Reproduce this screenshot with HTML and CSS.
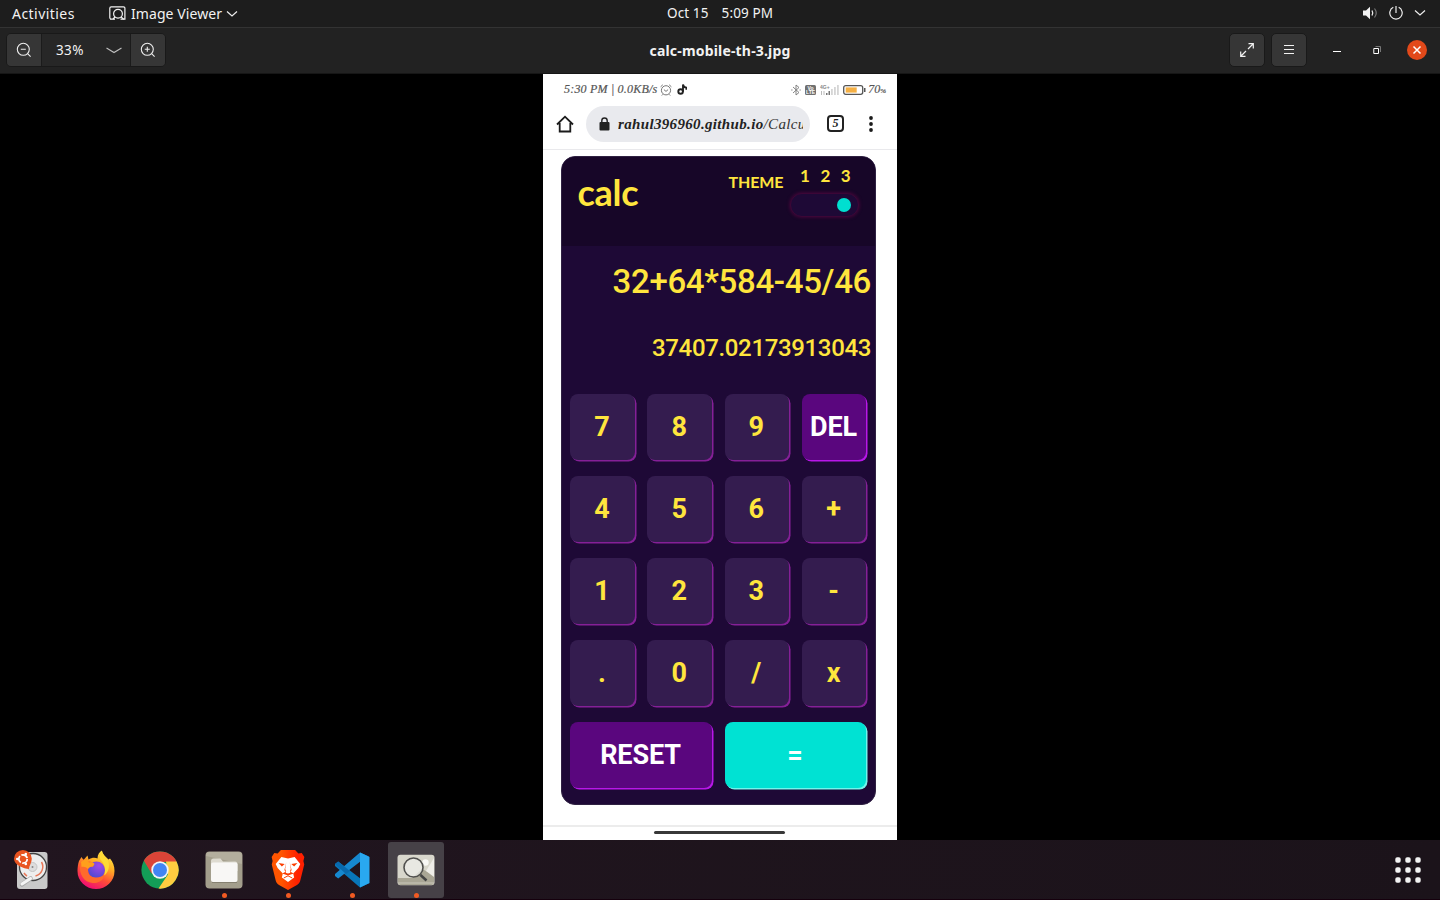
FILE: index.html
```
<!DOCTYPE html>
<html lang="en">
<head>
<meta charset="utf-8">
<title>calc-mobile-th-3.jpg</title>
<link rel="stylesheet" href="styles.css">
</head>
<body>
<div class="desktop">
  <header class="topbar">
    <div class="topbar-left">
      <span class="activities">Activities</span>
      <svg class="app-icon" width="17" height="15" viewBox="0 0 17 15" fill="none" stroke="#f2f2f2" stroke-width="1.2"><path d="M4 13H2.200a1.400 1.400 0 0 1-1.400-1.400V2.200A1.400 1.400 0 0 1 2.200.8h12.300a1.400 1.400 0 0 1 1.400 1.400v11M1 13.200h5M11.500 13.200h5"/><circle cx="9" cy="7.800" r="4.400"/><path d="M12.200 11l2.600 2.400M4 13l2-2"/></svg>
      <span class="app-name">Image Viewer</span>
      <svg width="12" height="8" viewBox="0 0 12 8" fill="none" stroke="#eee" stroke-width="1.200"><path d="M1 1.500l5 4.500 5-4.500"/></svg>
    </div>
    <div class="clock"><span>Oct 15</span><span>5:09 PM</span></div>
    <div class="topbar-right">
      <svg width="16" height="14" viewBox="0 0 16 14" fill="none"><path d="M1 4.500h3L8 .8v12.400L4 9.500H1z" fill="#f2f2f2"/><path d="M10 4.500q1.500 2.500 0 5" stroke="#eee" stroke-width="1.300"/><path d="M12.500 2.500q3.500 4.500 0 9" stroke="#777" stroke-width="1.200"/></svg>
      <svg width="14" height="14" viewBox="0 0 14 14" fill="none" stroke="#eee" stroke-width="1.200"><path d="M7 0v7M4.300 1.300a6.200 6.200 0 1 0 5.400 0"/></svg>
      <svg width="12" height="8" viewBox="0 0 12 8" fill="none" stroke="#eee" stroke-width="1.200"><path d="M1 1.500l5 4.500 5-4.500"/></svg>
    </div>
  </header>

  <div class="titlebar">
    <div class="zoom-group">
      <button class="tool"><svg width="16" height="16" viewBox="0 0 16 16" fill="none" stroke="#eee" stroke-width="1.100"><circle cx="7.300" cy="7.300" r="6"/><path d="M4.800 7.300h5M11.600 11.600l3 3"/></svg></button>
      <div class="zoom-value"><span>33%</span><svg width="16" height="7" viewBox="0 0 16 7" fill="none" stroke="#bbb" stroke-width="1.200"><path d="M.5 1l7.500 4.500L15.500 1"/></svg></div>
      <button class="tool"><svg width="16" height="16" viewBox="0 0 16 16" fill="none" stroke="#eee" stroke-width="1.100"><circle cx="7.300" cy="7.300" r="6"/><path d="M4.800 7.300h5M7.300 4.800v5M11.600 11.600l3 3"/></svg></button>
    </div>
    <div class="file-title">calc-mobile-th-3.jpg</div>
    <div class="window-tools">
      <button class="tool boxed"><svg width="14" height="14" viewBox="0 0 14 14" fill="none" stroke="#f2f2f2" stroke-width="1.200"><path d="M8 6l5-5M8.500.7h4.800v4.800M6 8l-5 5M.7 8.500v4.800h4.800"/></svg></button>
      <button class="tool boxed"><svg width="10" height="10" viewBox="0 0 10 10" stroke="#f2f2f2"><path d="M0 .5h10M0 4.500h10M0 8.500h10"/></svg></button>
      <svg class="minimize" width="8" height="2" viewBox="0 0 8 2"><path fill="#fff" d="M0 0h8v1H0z"/></svg>
      <svg class="restore" width="9" height="9" viewBox="0 0 9 9" fill="none"><path d="M2.500 .5h5V6" stroke="#777"/><path d="M.8 2.500h4.700v5H.8z" stroke="#fff"/></svg>
      <svg class="close" width="20" height="20" viewBox="0 0 20 20"><circle cx="10" cy="10" r="10" fill="#e2491a"/><path d="M6.500 6.500l7 7M13.500 6.500l-7 7" stroke="#fff" stroke-width="1.500"/></svg>
    </div>
  </div>

  <main class="viewer">
    <div class="phone">
      <div class="status">
        <span class="status-text">5:30 PM | 0.0KB/s</span>
        <svg class="alarm" width="12" height="12" viewBox="0 0 12 12" fill="none" stroke="#666" stroke-width=".9"><circle cx="6" cy="6.300" r="4.600"/><path d="M3.900 5.600L6 7.400l2.100-1.800M.6 2.800L2.800.8M11.400 2.800L9.200.8M2.700 10.400l-.9 1.100M9.300 10.400l.9 1.100"/></svg>
        <svg class="note" width="10" height="11" viewBox="0 0 10 11" fill="none" stroke="#222" stroke-width="1.900"><circle cx="3.600" cy="7.500" r="2.300"/><path d="M6 7.800V.5c.3 1.900 1.300 3 3.400 3.100v2.200"/></svg>
        <div class="status-icons">
          <svg width="10" height="12" viewBox="0 0 10 12" fill="none" stroke="#777" stroke-width=".9"><path d="M2 3l6 5.500-3 2.500V1l3 2.500L2 9M.2 6h1.300M8.500 6h1.300"/></svg>
          <svg width="11" height="10" viewBox="0 0 11 10"><rect width="11" height="10" rx="1.500" fill="#707070"/><text x="5.500" y="4.800" class="tiny white" text-anchor="middle">Vo</text><text x="5.500" y="9" class="tiny white" text-anchor="middle">LTE</text></svg>
          <svg width="19" height="11" viewBox="0 0 19 11"><text x="0" y="4.500" class="tiny gray">4G+</text><path d="M1.500 7v4M4 7v4" stroke="#aaa" stroke-width=".8"/><path d="M6 9h1.500v2H6zM8.500 7H10v4H8.500z" fill="#777"/><path d="M11 5h1.800v6H11zM14 3h1.800v8H14zM17 1h1.800v10H17z" fill="#d5d5d5"/></svg>
          <svg width="23" height="10" viewBox="0 0 23 10"><rect x=".7" y=".7" width="19" height="8.600" rx="2" fill="#fff" stroke="#555" stroke-width="1.300"/><rect x="2.700" y="2.400" width="11" height="5.200" fill="#f5b044"/><path d="M21 3h1.500v4H21z" fill="#555"/></svg>
          <span class="battery-text">70<small>%</small></span>
        </div>
      </div>

      <div class="browser">
        <svg class="home" width="18" height="18" viewBox="0 0 18 18" fill="none" stroke="#1b1b1b" stroke-width="1.800"><path d="M1 9.500L9 1.700l8 7.800M3.700 8v8.500h10.600V8"/></svg>
        <div class="url">
          <svg width="11" height="14" viewBox="0 0 11 14"><rect x=".5" y="5" width="10" height="8.500" rx="1" fill="#222"/><path d="M2.800 5.500V3.700a2.700 2.700 0 0 1 5.400 0v1.800" fill="none" stroke="#222" stroke-width="1.400"/></svg>
          <span class="url-text">rahul396960.github.io<span class="path">/Calcu</span></span>
        </div>
        <div class="tabs">5</div>
        <svg class="more" width="4" height="16" viewBox="0 0 4 16" fill="#1b1b1b"><circle cx="2" cy="2" r="1.900"/><circle cx="2" cy="8" r="1.900"/><circle cx="2" cy="14" r="1.900"/></svg>
      </div>

      <div class="page">
        <section class="calculator">
          <div class="calc-head">
            <h1 class="brand">calc</h1>
            <div class="theme-label">THEME</div>
            <div class="switcher">
              <div class="numbers"><span>1</span><span>2</span><span>3</span></div>
              <div class="toggle"><i class="knob"></i></div>
            </div>
          </div>
          <div class="display">
            <div class="expression">32+64*584-45/46</div>
            <div class="result">37407.02173913043</div>
          </div>
          <div class="keys">
            <button class="key">7</button><button class="key">8</button><button class="key">9</button><button class="key purple">DEL</button>
            <button class="key">4</button><button class="key">5</button><button class="key">6</button><button class="key">+</button>
            <button class="key">1</button><button class="key">2</button><button class="key">3</button><button class="key">-</button>
            <button class="key">.</button><button class="key">0</button><button class="key">/</button><button class="key">x</button>
            <button class="key purple wide">RESET</button><button class="key cyan wide">=</button>
          </div>
        </section>
      </div>
      <div class="nav"><i class="home-bar"></i></div>
    </div>
  </main>

  <footer class="dock">
    <div class="dock-item">
      <svg width="40" height="42" viewBox="0 0 40 42"><rect x="5" y="3" width="30.500" height="37" rx="3" fill="#c9c9c9"/><circle cx="21" cy="18" r="13.500" fill="#eee" stroke="#444" stroke-width="1.300"/><circle cx="20.500" cy="18" r="4.500" fill="#ddd" stroke="#c5c5c5"/><circle cx="20.500" cy="18" r="1" fill="#888"/><path d="M29.500 13a9.500 9.500 0 0 1-6 14M12 24a9 9 0 0 0 3 3" fill="none" stroke="#e87858" stroke-width="1.500"/><path d="M10 35.500l8.500-6" stroke="#aaa" stroke-width="4.500" stroke-linecap="round"/><path d="M10 35l8.500-5.500" stroke="#f4f4f4" stroke-width="3.200" stroke-linecap="round"/><path d="M17 20C12 20 2 16 2 9.800a8.900 8.900 0 0 1 17.800 0c0 4-2.800 7-2.800 10.200z" fill="#e95420"/><circle cx="11" cy="10" r="4.200" fill="none" stroke="#fff" stroke-width="1.800" stroke-dasharray="7.200 1.600"/><g fill="#fff"><circle cx="5.300" cy="10" r="1.300"/><circle cx="13.800" cy="5" r="1.300"/><circle cx="13.800" cy="15" r="1.300"/></g></svg>
    </div>
    <div class="dock-item">
      <svg width="40" height="40" viewBox="0 0 40 40"><defs><linearGradient id="fox" x1=".8" y1="0" x2=".3" y2="1"><stop offset="0" stop-color="#fff04a"/><stop offset=".35" stop-color="#ffb024"/><stop offset=".65" stop-color="#ff4f36"/><stop offset="1" stop-color="#ef0878"/></linearGradient><radialGradient id="globe" cx=".65" cy=".25" r=".8"><stop offset="0" stop-color="#a348e8"/><stop offset="1" stop-color="#4a4ad0"/></radialGradient></defs><path d="M3 11l2.500-4 2 3 4-4.500 1 4c3-2 7-2 9-1 0-4 2-6.500 4.500-8 .5 4 4 6 6.500 9l1.500-1C37 12 38.500 16 38.500 21A18.500 18 0 0 1 1.500 21C1.500 17 2 14 3 11z" fill="url(#fox)"/><circle cx="20.500" cy="20" r="8.500" fill="url(#globe)"/><path d="M4 14l4-5 4 3c2-1 4 0 6 2l-1 2.500c-3 0-5 1-5 4 0 4 3 7 8 7 4 0 7-1.500 9-4-1 7-7 10-12.500 9.500C8 32 3 25 4 14z" fill="#ff6a2c"/><path d="M5 12l5-3.500 3 4c3-.5 5 0 5.500 1.500l-1.500 2.500c-3 0-4.500 1-5 2.500-2-2-4-2.500-6.500-2z" fill="#ff9f1c"/><path d="M26 1.500c-3 4-3 7 0 10 3 4 4 9 2 14 5-3 6-10 4-15-2-3-5-5-6-9z" fill="#ffdb36"/></svg>
    </div>
    <div class="dock-item">
      <svg width="38" height="38" viewBox="0 0 38 38"><circle cx="19" cy="19" r="18.600" fill="#139e57"/><path d="M2.900 9.700A18.600 18.600 0 0 1 35.100 9.700L35.500 11H19l-8.500 11.500z" fill="#db4437"/><path d="M35.500 10.500A18.600 18.600 0 0 1 17.500 37.600L27 23.500 25 10.500z" fill="#ffcd40"/><circle cx="19" cy="19" r="8.700" fill="#f4f4f4"/><circle cx="19" cy="19" r="7" fill="#4285f4"/></svg>
    </div>
    <div class="dock-item running">
      <svg width="38" height="38" viewBox="0 0 38 38"><rect x=".5" y=".5" width="37" height="37" rx="4" fill="#a39e8c"/><path d="M1 5q0-4 4-4h28q4 0 4 4v8z" fill="#b3ae9d"/><path d="M6 10q0-2.500 2.500-2.500h7l2.500 3H30q2.500 0 2.500 2.500v7H6z" fill="#dedbd0"/><rect x="6" y="11.500" width="26.500" height="19.500" rx="2" fill="#f8f7f5"/><path d="M7 31.500h25" stroke="#858070"/></svg>
    </div>
    <div class="dock-item running">
      <svg width="34" height="40" viewBox="0 0 36 40" preserveAspectRatio="none"><defs><linearGradient id="lion"><stop offset=".3" stop-color="#ff5500"/><stop offset=".8" stop-color="#ff2000"/></linearGradient></defs><path d="M10.500 0h15l3.500 3.500 3.500-.5 2.800 4-1 4 .9 3.500-4.200 16c-.5 2-2 3.500-3.500 4.500L18 40l-9.500-5C7 34 5.500 32.500 5 30.500L.8 14.500l.9-3.500-1-4 2.800-4 3.500.5z" fill="url(#lion)"/><path d="M11 7l7 1.500L25 7l6 7-2 4-5.500 5.500 1 4L18 32l-6.500-4.500 1-4L7 18l-2-4z" fill="#fff"/><path d="M8 13l6.500 1-3 2.500zM28 13l-6.500 1 3 2.500zM16.200 12l-1.200 7 1 2.500-4 2 6 2 6-2-4-2 1-2.500-1.200-7 2 8-1.800 3-2 .6-2-.6-1.800-3z" fill="#fb3d00"/><path d="M13.500 28l4.500-2.200 4.500 2.200" fill="none" stroke="#fb3d00"/></svg>
    </div>
    <div class="dock-item running">
      <svg width="36" height="36" viewBox="0 0 36 36"><path d="M4.200 9.500L1 12v2l25 21.500L35.500 31 27 27z" fill="#0876b9"/><path d="M4.200 26.500L1 24v-2L26 .5 35 4.500 27 9z" fill="#1688cf"/><path d="M26 .5L35.500 5v26L26 35.500z" fill="#29a8ef"/><path d="M4.200 9.500L1 12l11 10 4-3z" fill="#0869ad"/></svg>
    </div>
    <div class="dock-item running active">
      <svg width="38" height="32" viewBox="0 0 38 32"><rect x=".5" y=".8" width="37" height="30.500" rx="3" fill="#d8d7cc"/><path d="M1 24L15 24l10-9 12 6v7q0 3-3 3H4q-3 0-3-3z" fill="#a9a695"/><path d="M29 17l8-13v19z" fill="#efeee9"/><circle cx="28.500" cy="8.500" r="3.200" fill="#f8f8f5"/><path d="M1 29h36" stroke="#c9c7ba"/><circle cx="16.500" cy="13.500" r="9.500" fill="#eeeeea" fill-opacity=".75" stroke="#50504e" stroke-width="1.600"/><path d="M23.500 21l6 5.500" stroke="#444" stroke-width="2.500"/></svg>
    </div>
    <svg class="apps" width="26" height="26" viewBox="0 0 26 26" fill="#f2f2f2"><g id="row"><rect x=".3" y=".3" width="5.400" height="5.400" rx="1.800"/><rect x="10.300" y=".3" width="5.400" height="5.400" rx="1.800"/><rect x="20.300" y=".3" width="5.400" height="5.400" rx="1.800"/></g><use href="#row" y="10"/><use href="#row" y="20"/></svg>
  </footer>
</div>
</body>
</html>
```
FILE: styles.css
```
* { box-sizing: border-box; }
body { margin: 0; background: #000; overflow: hidden; }
button { border: 0; padding: 0; margin: 0; font: inherit; color: inherit; background: none; }
svg { display: block; flex: none; }

.desktop { width: 1440px; height: 900px; display: flex; flex-direction: column; font-family: "Noto Sans", "Open Sans", sans-serif; color: #f2f2f2; }

.topbar { height: 28px; flex: none; display: grid; grid-template-columns: 1fr 106px 1fr; align-items: center; background: #1d1d1d; border-bottom: 1px solid #333; font-size: 14px; line-height: 27px; white-space: nowrap; }
.topbar-left { display: flex; align-items: center; padding-left: 12px; }
.activities { width: 97px; letter-spacing: 0.45px; }
.app-icon { margin-right: 5px; }
.app-name { width: 95px; letter-spacing: 0.08px; }
.clock { display: flex; justify-content: space-between; font-size: 13.500px; letter-spacing: 0.1px; line-height: 24px; padding-bottom: 2px; }
.topbar-right { display: flex; align-items: center; justify-content: flex-end; gap: 11px; padding: 0 14px 1px 0; }

.titlebar { height: 46px; flex: none; display: grid; grid-template-columns: 1fr 200px 1fr; align-items: center; background: #222; border-bottom: 1px solid #161616; padding-bottom: 1px; }
.zoom-group { margin-left: 6px; width: 160px; height: 34px; display: flex; border: 1px solid #191919; border-radius: 5px; overflow: hidden; background: #272727; }
.tool { width: 34px; display: flex; align-items: center; justify-content: center; background: #363636; }
.zoom-value { flex: 1; display: flex; align-items: center; justify-content: space-between; padding: 0 8px 0 14px; border: solid #1b1b1b; border-width: 0 1px; font-size: 13.500px; letter-spacing: 0.35px; }
.file-title { text-align: center; font-weight: 700; font-size: 14px; letter-spacing: 0.18px; }
.window-tools { display: flex; align-items: center; justify-content: flex-end; padding-right: 13px; }
.boxed { width: 36px; height: 34px; margin-right: 6px; border: 1px solid #191919; border-radius: 5px; }
.minimize { margin: 4px 0 0 20px; }
.restore { margin: 0 25px 0 32px; }

.viewer { height: 766px; flex: none; display: flex; justify-content: center; background: #000; }
.phone { width: 354px; background: #fff; display: flex; flex-direction: column; overflow: hidden; color: #222; }
.status { height: 31px; display: flex; align-items: center; padding: 0 11px 0 21px; font: italic 12px "Liberation Serif", serif; color: #555; white-space: nowrap; }
.status-text { width: 96px; letter-spacing: 0.2px; -webkit-text-stroke: .2px #555; }
.note { margin-left: 5px; }
.status-icons { margin-left: auto; display: flex; align-items: center; gap: 4px; }
.battery-text { margin-left: -2px; -webkit-text-stroke: .2px #555; }
.battery-text small { font-size: 7px; }
.tiny { font: 700 5px "Liberation Sans", sans-serif; }
.white { fill: #fff; }
.gray { fill: #888; }

.browser { height: 45px; display: flex; align-items: center; padding: 0 24px 7px 12.500px; border-bottom: 1px solid #e9e9ec; }
.home { margin-right: 12.500px; }
.url { width: 224px; height: 36px; border-radius: 18px; background: #e9eaee; display: flex; align-items: center; gap: 8px; padding: 0 7px 0 13px; }
.url-text { flex: 1; overflow: hidden; white-space: nowrap; font: italic 700 15px/24px "Liberation Serif", serif; letter-spacing: .34px; color: #222; }
.path { font-weight: 400; color: #333; }
.tabs { width: 17px; height: 17px; margin-left: 17px; border: 2px solid #222; border-radius: 4px; font: italic 700 12px/13px "Liberation Serif", serif; text-align: center; }
.more { margin-left: auto; }

.page { height: 675px; padding: 6px 21px 0 17.500px; }
.calculator { height: 649px; border-radius: 14px; background: #1e0936; border: 1px solid #2f2142; overflow: hidden; }
.calc-head { height: 89px; display: flex; background: #170628; color: #ffe53d; font-family: Lato, sans-serif; }
.brand { width: 151px; margin: 13px 0 0 16px; font-size: 36px; line-height: 44px; font-weight: 700; letter-spacing: -0.3px; }
.theme-label { width: 60px; margin-top: 15px; font-size: 16px; line-height: 20px; font-weight: 700; letter-spacing: -0.15px; }
.switcher { width: 72px; padding-top: 8px; }
.numbers { display: flex; gap: 10.500px; padding-left: 11.500px; font-size: 17px; line-height: 21px; font-weight: 700; }
.toggle { width: 69px; height: 24px; margin: 7px 0 0 1px; border: 1px solid #3c0636; border-radius: 12px; background: #1e0936; box-shadow: 0 0 3px 1px #3c0636; padding: 4px 7px; display: flex; justify-content: flex-end; }
.knob { width: 14px; height: 14px; border-radius: 50%; background: #00dfd0; }
.display { height: 148px; padding: 14px 4px 0 0; text-align: right; color: #ffe53d; font-family: Roboto, sans-serif; font-weight: 500; }
.expression { font-size: 33px; line-height: 44px; letter-spacing: -0.33px; }
.result { margin-top: 26px; font-size: 24px; line-height: 36px; letter-spacing: -0.35px; }
.keys { display: grid; grid-template-columns: repeat(4, 64.500px); gap: 16px 12.700px; padding-left: 8.700px; }
.key { height: 66px; border-radius: 8px; background: #341c4f; box-shadow: 1.500px 1.500px 0 #852097; color: #ffe53d; font: 700 27px/66px Roboto, sans-serif; text-align: center; padding-right: 1px; }
.purple { background: #5a067e; box-shadow: 1.500px 1.500px 0 #b817e8; color: #fff; letter-spacing: -0.1px; }
.cyan { background: #00e2d3; box-shadow: 1.500px 1.500px 0 #70f5ec; color: #fff; line-height: 64px; }
.wide { grid-column: span 2; }
.nav { height: 15px; border-top: 2px solid #ececec; display: flex; justify-content: center; padding: 4px 1px 0 0; }
.home-bar { width: 131px; height: 3px; border-radius: 2px; background: #383838; }

.dock { height: 60px; display: flex; align-items: center; padding: 0 19px 0 4px; gap: 8px; background: linear-gradient(90deg, #21151f, #1b131a); border-bottom: 1px solid #15000d; }
.dock-item { width: 56px; height: 56px; border-radius: 3px; display: flex; align-items: center; justify-content: center; position: relative; }
.running::after { content: ""; position: absolute; bottom: 0; left: 25.500px; width: 5px; height: 5px; border-radius: 50%; background: #f25a22; }
.active { background: #464147; }
.apps { margin-left: auto; }
```
